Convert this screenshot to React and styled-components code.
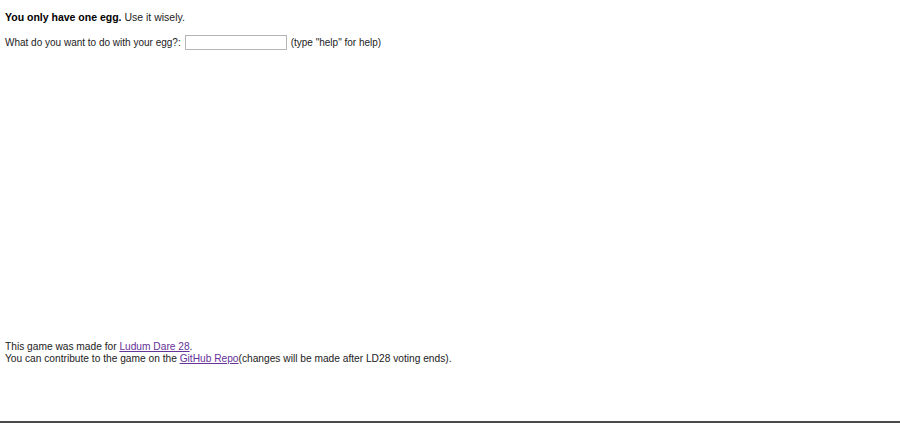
import styled, { createGlobalStyle } from 'styled-components'

const GlobalStyle = createGlobalStyle`
  html, body {
    margin: 0;
    padding: 0;
    background: #fff;
  }
  body {
    font-family: "Liberation Sans", Arial, sans-serif;
    font-size: 10.2px;
    color: #000;
  }
`

const Page = styled.div`
  height: 423px;
  box-sizing: border-box;
  display: flex;
  flex-direction: column;
  padding: 10px 5px 0;
  border-bottom: 2px solid #4a4a4a;
`

const Game = styled.main`
  flex: 1;
  display: flex;
  flex-direction: column;
  gap: 11px;
`

const Line = styled.p`
  margin: 0;
  font-size: 10.5px;
  line-height: 14px;
  color: #222;

  strong {
    color: #000;
  }
`

const Prompt = styled.label`
  display: flex;
  align-items: center;
  gap: 4px;
  font-size: 10px;
  color: #222;
`

const EggInput = styled.input`
  width: 96px;
  height: 11px;
  padding: 1px 2px;
  border: 1px solid #b5b5b5;
  font: inherit;
  outline: none;
`

const Footer = styled.footer`
  padding-bottom: 56px;
  line-height: 12px;
  color: #222;

  a {
    color: #663399;
  }
`

export default function App() {
  return (
    <>
      <GlobalStyle />
      <Page>
        <Game>
          <Line>
            <strong>You only have one egg.</strong> Use it wisely.
          </Line>
          <Prompt>
            What do you want to do with your egg?:
            <EggInput type="text" />
            (type "help" for help)
          </Prompt>
        </Game>
        <Footer>
          This game was made for <a href="#">Ludum Dare 28</a>.
          <br />
          You can contribute to the game on the <a href="#">GitHub Repo</a>(changes will be made after LD28 voting ends).
        </Footer>
      </Page>
    </>
  )
}
